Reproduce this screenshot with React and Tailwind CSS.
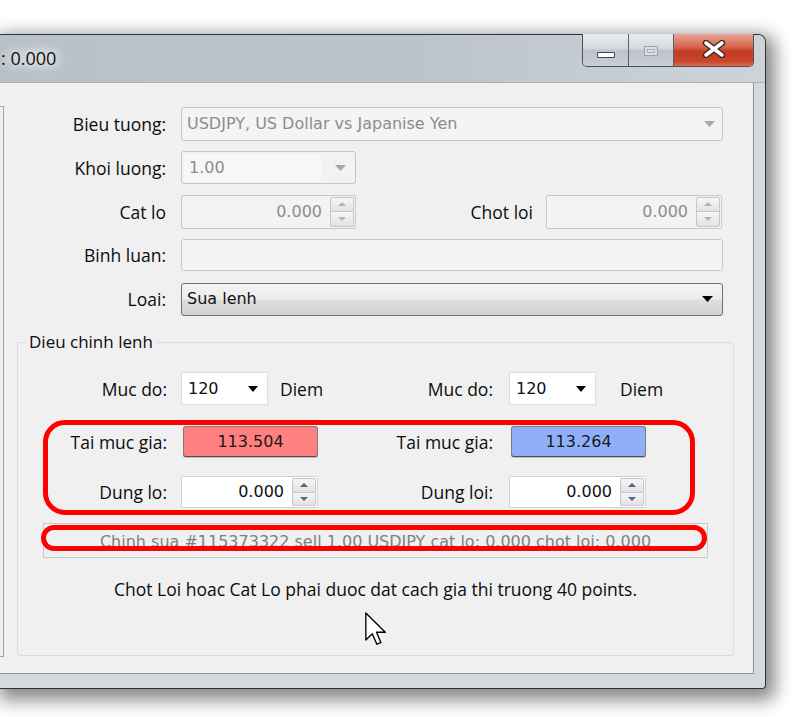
import clsx from "clsx";

// small filled triangle used by combo boxes and spin buttons
const Tri = ({ up = false, color = "#000", w = 9, h = 5 }) => (
  <svg width={w} height={h} viewBox={`0 0 ${w} ${h}`} className="block">
    <path d={up ? `M0 ${h}H${w}L${w / 2} 0Z` : `M0 0H${w}L${w / 2} ${h}Z`} fill={color} />
  </svg>
);

const mono = "font-['DejaVu_Sans'] text-[16px]";

const SpinButtons = ({ disabled }) => {
  const arrow = disabled ? "#b4b4b4" : "#4f6390";
  const half =
    "flex flex-1 items-center justify-center border border-[#c4c6cc] bg-[linear-gradient(to_bottom,#f6f6f6,#e2e2e2)]";
  return (
    <div className="my-[1px] mr-[1px] flex w-[24px] flex-col">
      <div className={clsx(half, "rounded-t-[2px]")}>
        <Tri up color={arrow} w={8} h={4} />
      </div>
      <div className={clsx(half, "-mt-px rounded-b-[2px]")}>
        <Tri color={arrow} w={8} h={4} />
      </div>
    </div>
  );
};

const Spin = ({ value, disabled, className }) => (
  <div
    className={clsx(
      "flex h-full items-stretch rounded-[2px] border",
      disabled ? "border-[#c6c8cc] bg-[#f3f3f3]" : "border-[#cfd1d6] bg-white",
      className
    )}
  >
    <div
      className={clsx(
        "flex flex-1 items-center justify-end pr-[8px]",
        mono,
        disabled ? "text-[#8d8d8d]" : "text-[#111]"
      )}
    >
      {value}
    </div>
    <SpinButtons disabled={disabled} />
  </div>
);

const Label = ({ children, className }) => (
  <span className={clsx("text-right text-[17.5px] leading-[24px] text-[#0c0c0c]", className)}>
    {children}
  </span>
);

const Row = ({ label, children }) => (
  <div className="flex h-[34px] items-center">
    <Label className="w-[162px]">{label}</Label>
    <div className="ml-[15px] flex h-full items-center">{children}</div>
  </div>
);

const MucDo = () => (
  <div className="flex h-[33px] w-[87px] items-center justify-between border border-[#dcdcdc] bg-white pl-[6px] pr-[9px]">
    <span className={clsx(mono, "text-[#111]")}>120</span>
    <Tri w={10} h={6} />
  </div>
);

const PriceBox = ({ value, bg }) => (
  <div
    className={clsx(
      "flex h-[31px] w-[135px] items-center justify-center rounded-[3px] border border-[#7c7c7c] border-b-[#505050] shadow-[0_1px_0_#bdbdbd]",
      bg,
      mono,
      "text-[#1a1a1a]"
    )}
  >
    {value}
  </div>
);

const TitleBar = () => (
  <div className="flex h-[48px] items-start justify-between rounded-tr-[7px] border-b border-[#aab2ba] bg-[linear-gradient(to_right,#b8c0c8,#bcc4cb_55%,#cdd3d9)]">
    <span className="mt-[11px] pl-[1px] text-[18px] leading-[24px] text-[#111] [text-shadow:0_0_8px_#fff,0_0_12px_#fff,0_0_16px_#eef1f3]">
      : 0.000
    </span>
    <div className="mr-[11px] -mt-px flex h-[33px] overflow-hidden rounded-b-[5px] border border-t-0 border-[#4b5157]">
      <div className="flex w-[46px] items-end justify-center border-r border-[#5a6066] bg-[linear-gradient(to_bottom,#e9ecef,#d4d9de_45%,#bcc3ca_52%,#c8cfd5)] pb-[8px]">
        <div className="h-[6px] w-[18px] rounded-[1px] border border-[#3b4654] bg-white" />
      </div>
      <div className="flex w-[45px] items-center justify-center border-r border-[#5a6066] bg-[linear-gradient(to_bottom,#e9ecef,#d4d9de_45%,#bcc3ca_52%,#c8cfd5)] pt-[1px]">
        <div className="h-[10px] w-[14px] border border-[#9aa2aa] bg-[#d9dee2] p-[2px]">
          <div className="h-full w-full border border-[#aab1b8]" />
        </div>
      </div>
      <div className="flex w-[79px] items-center justify-center bg-[linear-gradient(to_bottom,#e8a596,#d9664f_40%,#c43b21_55%,#c9452c_85%,#d86d52)] pb-[3px]">
        <svg width="24" height="18" viewBox="0 0 24 18">
          <path d="M4 3L20 15M20 3L4 15" stroke="#3a2a28" strokeWidth="6.5" strokeLinecap="round" />
          <path d="M4 3L20 15M20 3L4 15" stroke="#fff" strokeWidth="3.6" strokeLinecap="round" />
        </svg>
      </div>
    </div>
  </div>
);

const Cursor = () => (
  <svg width="22" height="34" viewBox="0 0 13 20" className="absolute left-[365px] top-[529px]">
    <path
      d="M0.5 0.5V16.5L4.3 12.8L7 19L9.4 18L6.8 11.9H12Z"
      fill="#fff"
      stroke="#000"
      strokeWidth="0.8"
      strokeLinejoin="round"
    />
  </svg>
);

export default function App() {
  return (
    <div className="relative h-[717px] w-[800px] overflow-hidden bg-white font-['Open_Sans']">
      <div className="pt-[34px]">
        <div className="flex h-[655px] w-[766px] flex-col rounded-tr-[8px] rounded-br-[4px] border border-l-0 border-[#2f3338] bg-[#d4dadf] shadow-[4px_6px_18px_5px_rgba(0,0,0,0.48)]">
          <TitleBar />

          <div className="relative mr-[11px] flex h-[591px] border border-t-0 border-l-0 border-[#8b949c] bg-[#f0f0f0]">
            {/* edge of the order list pane on the left */}
            <div className="mt-[23px] h-[551px] w-[4px] border-y border-r border-[#a4a4a4]" />

            <div className="flex flex-1 flex-col pt-[24px]">
              <div className="flex flex-col gap-[9.75px]">
                <Row label="Bieu tuong:">
                  <div className="flex h-full w-[542px] items-center justify-between rounded-[3px] border border-[#c5c5c5] bg-[#f4f4f4] pl-[5px] pr-[7px]">
                    <span className={clsx(mono, "text-[16.5px] text-[#8c8c8c]")}>
                      USDJPY, US Dollar vs Japanise Yen
                    </span>
                    <Tri color="#a8a8a8" w={11} h={6} />
                  </div>
                </Row>
                <Row label="Khoi luong:">
                  <div className="flex h-[33px] w-[175px] items-stretch rounded-[3px] border border-[#c5c5c5] bg-[#f2f2f2]">
                    <div className={clsx("m-[2px] flex w-[137px] items-center bg-[#f7f7f7] pl-[5px] text-[#8c8c8c]", mono)}>
                      1.00
                    </div>
                    <div className="flex flex-1 items-center justify-center pl-[2px]">
                      <Tri color="#a8a8a8" w={11} h={6} />
                    </div>
                  </div>
                </Row>
                <Row label="Cat lo">
                  <Spin value="0.000" disabled className="w-[175px]" />
                  <Label className="w-[177px]">Chot loi</Label>
                  <Spin value="0.000" disabled className="ml-[13px] w-[176px]" />
                </Row>
                <Row label="Binh luan:">
                  <div className="h-[32px] w-[542px] rounded-[3px] border border-[#c8c8c8] bg-[#f3f3f3]" />
                </Row>
                <Row label="Loai:">
                  <div className="flex h-[33px] w-[542px] items-center justify-between rounded-[3px] border border-[#707070] bg-[linear-gradient(to_bottom,#f3f3f3,#ececec_48%,#dedede_52%,#d2d2d2)] pl-[5px] pr-[9px]">
                    <span className={clsx(mono, "text-[#111]")}>Sua lenh</span>
                    <Tri w={11} h={6} />
                  </div>
                </Row>
              </div>

              <fieldset className="relative ml-[13px] mt-[14px] w-[717px] rounded-[3px] border border-[#d5dde3] pb-[54px]">
                <legend className="ml-[8px] px-[3px] text-[17px] leading-[24px] text-[#0c0c0c]">
                  Dieu chinh lenh
                </legend>

                <div className="mt-[18px] grid h-[33px] grid-cols-[149px_177px_149px_1fr] items-center">
                  <Label>Muc do:</Label>
                  <div className="ml-[14px] flex items-center">
                    <MucDo />
                    <Label className="ml-[12px]">Diem</Label>
                  </div>
                  <Label>Muc do:</Label>
                  <div className="ml-[16px] flex items-center">
                    <MucDo />
                    <Label className="ml-[24px]">Diem</Label>
                  </div>
                </div>

                <div className="relative mt-[21px]">
                  <div className="grid h-[31px] grid-cols-[149px_177px_149px_1fr] items-center">
                    <Label>Tai muc gia:</Label>
                    <div className="ml-[16px]">
                      <PriceBox value="113.504" bg="bg-[#ff8080]" />
                    </div>
                    <Label>Tai muc gia:</Label>
                    <div className="ml-[18px]">
                      <PriceBox value="113.264" bg="bg-[#8fb0f8]" />
                    </div>
                  </div>
                  <div className="mt-[19px] grid h-[32px] grid-cols-[149px_177px_149px_1fr] items-center">
                    <Label>Dung lo:</Label>
                    <div className="ml-[14px] h-full">
                      <Spin value="0.000" className="w-[137px]" />
                    </div>
                    <Label>Dung loi:</Label>
                    <div className="ml-[16px] h-full">
                      <Spin value="0.000" className="w-[137px]" />
                    </div>
                  </div>
                  <div className="pointer-events-none absolute -top-[6px] -bottom-[7px] left-[25px] right-[38px] rounded-[22px] border-[5px] border-[#ff0000]" />
                </div>

                <div
                  className={clsx(
                    "relative ml-[25px] mt-[15px] flex h-[35px] w-[665px] items-center justify-center border border-[#c9c9c9] bg-[#f0f0f0] pt-[3px] text-[#808080]",
                    mono
                  )}
                >
                  Chinh sua #115373322 sell 1.00 USDJPY cat lo: 0.000 chot loi: 0.000
                  <div className="pointer-events-none absolute -left-[3px] right-0 top-[1px] bottom-[6px] rounded-full border-[5.5px] border-[#ff0000]" />
                </div>

                <p className="mt-[19px] text-center text-[17.5px] leading-[24px] text-[#0c0c0c]">
                  Chot Loi hoac Cat Lo phai duoc dat cach gia thi truong 40 points.
                </p>
              </fieldset>
            </div>

            <Cursor />
          </div>
        </div>
      </div>
    </div>
  );
}
